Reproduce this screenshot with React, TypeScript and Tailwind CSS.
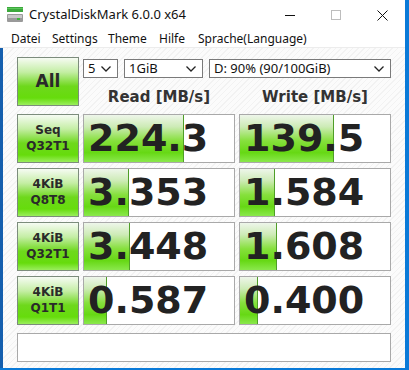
import React from 'react';

const rows = [
  { l1: 'Seq', l2: 'Q32T1', read: '224.3', readBar: 100, write: '139.5', writeBar: 94 },
  { l1: '4KiB', l2: 'Q8T8', read: '3.353', readBar: 45, write: '1.584', writeBar: 35 },
  { l1: '4KiB', l2: 'Q32T1', read: '3.448', readBar: 46, write: '1.608', writeBar: 37 },
  { l1: '4KiB', l2: 'Q1T1', read: '0.587', readBar: 23, write: '0.400', writeBar: 18 },
];

const menu = [
  { label: 'Datei', w: 'w-[41px]' },
  { label: 'Settings', w: 'w-[56px]' },
  { label: 'Theme', w: 'w-[51px]' },
  { label: 'Hilfe', w: 'w-[39px]' },
  { label: 'Sprache(Language)', w: '' },
];

const Chevron = () => (
  <svg width="10" height="6" viewBox="0 0 10 6" className="shrink-0">
    <polyline points="0.5,0.5 5,5 9.5,0.5" fill="none" stroke="#222" strokeWidth="1.3" />
  </svg>
);

const Combo = ({ text, w }: { text: string; w: string }) => (
  <div className={`${w} h-[19px] bg-white border border-[#7a7a7a] flex items-center justify-between pl-[4px] pr-[6px] text-[13px] text-[#111]`}>
    <span>{text}</span>
    <Chevron />
  </div>
);

const greenBtn =
  'bg-[linear-gradient(to_bottom,#f6fbf3_0%,#c4eea4_30%,#6ed81c_60%,#66dc0c_85%,#9aee5c_100%)] border border-[#7c8c7c]';

const Cell = ({ value, bar }: { value: string; bar: number }) => (
  <div className="relative w-[152px] h-[49px] bg-white border border-[#a9a9a9] flex items-center">
    <div
      className="absolute left-0 top-0 bottom-0 border-r border-[#4f9e28] bg-[linear-gradient(to_bottom,#eef6ea_0%,#cdebb6_25%,#86e03c_55%,#66d814_80%,#8ae84c_100%)]"
      style={{ width: bar }}
    />
    <span className="relative pl-[4px] text-[38px] leading-none font-bold text-[#222] font-['DejaVu_Sans',sans-serif]">
      {value}
    </span>
  </div>
);

const App = () => {
  return (
    <div className="w-[409px] h-[370px] overflow-hidden bg-[#0a7ad8] font-['Noto_Sans',sans-serif]">
      <div className="w-[405px] h-[368px] bg-white flex flex-col">
        {/* title bar */}
        <div className="h-[30px] flex items-center shrink-0">
          <svg width="16" height="16" viewBox="0 0 16 16" className="ml-[7px]">
            <rect x="0" y="0" width="16" height="5" fill="#3ca83c" />
            <rect x="0" y="1" width="16" height="1" fill="#5cc85c" />
            <rect x="0" y="7" width="16" height="8" rx="1" fill="#9a9a9a" />
            <rect x="1" y="8" width="14" height="3" fill="#c8c8c8" />
            <rect x="10" y="11" width="3" height="2" fill="#3cb43c" />
          </svg>
          <span className="ml-[6px] text-[13px] text-[#111]">CrystalDiskMark 6.0.0 x64</span>
          <div className="ml-auto flex h-full">
            <div className="w-[46px] flex items-center justify-center">
              <div className="w-[10px] h-px bg-[#111]" />
            </div>
            <div className="w-[46px] flex items-center justify-center">
              <div className="w-[10px] h-[10px] border border-[#bdbdbd]" />
            </div>
            <div className="w-[46px] flex items-center justify-center">
              <svg width="11" height="11" viewBox="0 0 11 11">
                <path d="M0.5 0.5 L10.5 10.5 M10.5 0.5 L0.5 10.5" stroke="#111" strokeWidth="1" />
              </svg>
            </div>
          </div>
        </div>
        {/* menu */}
        <div className="h-[17px] flex items-center pl-[11px] text-[12px] text-[#111] shrink-0">
          {menu.map((m) => (
            <span key={m.label} className={m.w}>
              {m.label}
            </span>
          ))}
        </div>
        <div className="h-px bg-[#ececec] shrink-0" />
        {/* body */}
        <div className="flex-1 border-l-[3px] border-[#155fae] bg-[repeating-linear-gradient(135deg,#fbfbfb_0px,#fbfbfb_3px,#f2f2f2_3px,#f2f2f2_4px)] pl-[14px] pt-[9px] flex flex-col">
          <div className="flex gap-[4px]">
            <div className={`w-[62px] h-[49px] ${greenBtn} flex items-center justify-center text-[17px] font-bold text-[#2a2a2a] font-['DejaVu_Sans',sans-serif]`}>
              All
            </div>
            <div className="flex flex-col w-[308px]">
              <div className="flex gap-[6px] mt-[2px]">
                <Combo text="5" w="w-[35px]" />
                <Combo text="1GiB" w="w-[79px]" />
                <Combo text="D: 90% (90/100GiB)" w="w-[182px]" />
              </div>
              <div className="flex gap-[4px] mt-[8px]">
                <div className="w-[152px] text-center text-[15px] font-bold text-[#333] font-['DejaVu_Sans',sans-serif]">
                  Read [MB/s]
                </div>
                <div className="w-[152px] text-center text-[15px] font-bold text-[#333] font-['DejaVu_Sans',sans-serif]">
                  Write [MB/s]
                </div>
              </div>
            </div>
          </div>
          <div className="flex flex-col gap-[5px] mt-[5px]">
            {rows.map((r, i) => (
              <div key={i} className="flex gap-[4px]">
                <div className={`w-[62px] h-[49px] ${greenBtn} flex flex-col items-center justify-center text-[12px] leading-[16px] font-bold text-[#2a2a2a] font-['DejaVu_Sans',sans-serif]`}>
                  <span>{r.l1}</span>
                  <span>{r.l2}</span>
                </div>
                <Cell value={r.read} bar={r.readBar} />
                <Cell value={r.write} bar={r.writeBar} />
              </div>
            ))}
          </div>
          <div className="mt-[8px] w-[374px] h-[29px] bg-white border border-[#a9a9a9]" />
        </div>
      </div>
    </div>
  );
};

export default App;
